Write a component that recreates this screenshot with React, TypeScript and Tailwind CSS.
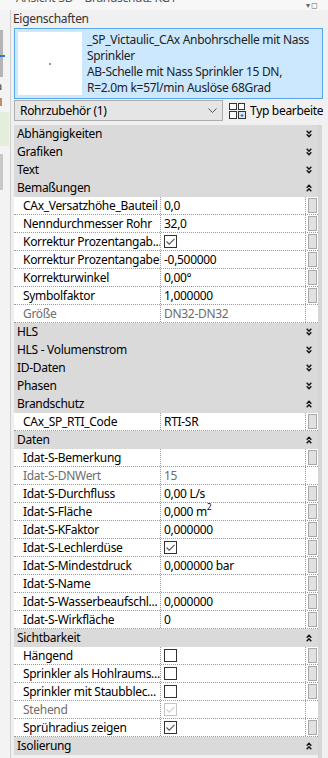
import React from "react";

type Row =
  | { kind: "cat"; label: string; open?: boolean }
  | {
      kind: "prop";
      label: string;
      value?: React.ReactNode;
      check?: boolean;
      box?: boolean;
      off?: boolean;
    };

const rows: Row[] = [
  { kind: "cat", label: "Abhängigkeiten" },
  { kind: "cat", label: "Grafiken" },
  { kind: "cat", label: "Text" },
  { kind: "cat", label: "Bemaßungen", open: true },
  { kind: "prop", label: "CAx_Versatzhöhe_Bauteil", value: "0,0" },
  { kind: "prop", label: "Nenndurchmesser Rohr", value: "32,0" },
  { kind: "prop", label: "Korrektur Prozentangab...", box: true, check: true },
  { kind: "prop", label: "Korrektur Prozentangabe", value: "-0,500000" },
  { kind: "prop", label: "Korrekturwinkel", value: "0,00°" },
  { kind: "prop", label: "Symbolfaktor", value: "1,000000" },
  { kind: "prop", label: "Größe", value: "DN32-DN32", off: true },
  { kind: "cat", label: "HLS" },
  { kind: "cat", label: "HLS - Volumenstrom" },
  { kind: "cat", label: "ID-Daten" },
  { kind: "cat", label: "Phasen" },
  { kind: "cat", label: "Brandschutz", open: true },
  { kind: "prop", label: "CAx_SP_RTI_Code", value: "RTI-SR" },
  { kind: "cat", label: "Daten", open: true },
  { kind: "prop", label: "Idat-S-Bemerkung", value: "" },
  { kind: "prop", label: "Idat-S-DNWert", value: "15", off: true },
  { kind: "prop", label: "Idat-S-Durchfluss", value: "0,00 L/s" },
  {
    kind: "prop",
    label: "Idat-S-Fläche",
    value: (
      <>
        0,000 m<sup className="text-[8px] -top-[5px]">2</sup>
      </>
    ),
  },
  { kind: "prop", label: "Idat-S-KFaktor", value: "0,000000" },
  { kind: "prop", label: "Idat-S-Lechlerdüse", box: true, check: true },
  { kind: "prop", label: "Idat-S-Mindestdruck", value: "0,000000 bar" },
  { kind: "prop", label: "Idat-S-Name", value: "" },
  { kind: "prop", label: "Idat-S-Wasserbeaufschl...", value: "0,000000" },
  { kind: "prop", label: "Idat-S-Wirkfläche", value: "0" },
  { kind: "cat", label: "Sichtbarkeit", open: true },
  { kind: "prop", label: "Hängend", box: true },
  { kind: "prop", label: "Sprinkler als Hohlraums...", box: true },
  { kind: "prop", label: "Sprinkler mit Staubblec...", box: true },
  { kind: "prop", label: "Stehend", box: true, check: true, off: true },
  { kind: "prop", label: "Sprühradius zeigen", box: true, check: true },
  { kind: "cat", label: "Isolierung", open: true },
];

function Chevrons({ up }: { up?: boolean }) {
  return (
    <svg width="6" height="8" viewBox="0 0 6 8" className={up ? "rotate-180" : ""}>
      <path d="M0.7 0.8 L3 3.2 L5.3 0.8 M0.7 4.3 L3 6.7 L5.3 4.3" fill="none" stroke="#111" strokeWidth="1.4" />
    </svg>
  );
}

function CheckBox({ checked, off }: { checked?: boolean; off?: boolean }) {
  return (
    <div
      className={`w-[13px] h-[13px] border bg-white flex items-center justify-center ${
        off ? "border-[#c4c4c4]" : "border-[#333333]"
      }`}
    >
      {checked && (
        <svg width="11" height="11" viewBox="0 0 11 11">
          <path d="M1.5 5.5 L4.2 8.2 L9.5 2.8" fill="none" stroke={off ? "#cfcfcf" : "#555"} strokeWidth="1.1" />
        </svg>
      )}
    </div>
  );
}

function TypeIcon() {
  return (
    <svg width="17" height="16" viewBox="0 0 17 16">
      <rect x="0.5" y="0.5" width="7" height="6" fill="#fff" stroke="#333" />
      <rect x="0.5" y="8.5" width="7" height="7" fill="#fff" stroke="#333" />
      <rect x="9.5" y="0.5" width="6" height="6" fill="#fff" stroke="#333" />
      <rect x="9.5" y="8.5" width="7" height="7" fill="#dbe9f6" stroke="#333" />
      <path d="M11.5 12.5 h3 M13 11 v3" stroke="#2a6fb5" />
    </svg>
  );
}

function GridRow({ row }: { row: Row }) {
  if (row.kind === "cat") {
    return (
      <div className="h-[18px] flex items-center justify-between bg-[#dadada] pl-[3px] pr-[6px] text-black">
        <span>{row.label}</span>
        <Chevrons up={row.open} />
      </div>
    );
  }
  const tone = row.off ? "text-[#6d6d6d]" : "text-black";
  return (
    <div className="h-[18px] flex bg-white border-b border-dotted border-[#9a9a9a]">
      <div className={`w-[147px] shrink-0 pl-[9px] border-r border-dotted border-[#9a9a9a] whitespace-nowrap overflow-hidden ${tone}`}>
        {row.label}
      </div>
      <div className={`flex-1 pl-[3px] flex items-center border-r border-dotted border-[#9a9a9a] whitespace-nowrap ${tone}`}>
        {row.box ? <CheckBox checked={row.check} off={row.off} /> : row.value}
      </div>
      <div className="w-[12px] shrink-0 flex items-center justify-center">
        {!row.off && <div className="w-[9px] h-[15px] bg-[#e1e1e1] border border-[#a9a9a9]" />}
      </div>
    </div>
  );
}

export default function App() {
  return (
    <div
      className="w-[328px] h-[758px] overflow-hidden bg-[#f0f0f0] text-[12px] leading-[18px] tracking-[-0.3px] text-black"
      style={{ fontFamily: '"Noto Sans", "Open Sans", sans-serif' }}
    >
      <div className="h-[10px] overflow-hidden flex items-start justify-between pl-[16px] pr-[10px] bg-[#f7f7f7]">
        <span className="leading-[14px] -mt-[9px] text-[#555]">Ansicht 3D – Brandschutz KG1</span>
        <span className="text-[8px] leading-[10px] text-[#666]">▾ ◻</span>
      </div>
      <div className="flex h-[748px]">
        <div className="w-[10px] shrink-0 flex flex-col bg-[#f3f3f3]">
          <div className="h-[20px]" />
          <div className="h-[47px] w-[3px] bg-[#b5b5b5]" />
          <div className="h-[2px] w-[5px] bg-[#2b79d0] -mt-[22px] mb-[20px]" />
          <div className="h-[18px] text-[11px] leading-[18px] text-[#444] -ml-[4px]">a</div>
          <div className="h-[14px] text-[11px] leading-[14px] text-[#444] -ml-[3px]">ll</div>
          <div className="h-[34px] w-[9px] bg-[#e4eedb] mt-[3px]" />
          <div className="h-[36px] w-[3px] bg-[#c8c8c8] mt-[8px]" />
        </div>
        <div className="flex-1 flex flex-col border-l border-[#cfcfcf]">
          <div className="h-[18px] pl-[2px] text-[#333]">Eigenschaften</div>
          <div className="ml-[3px] mr-[5px] h-[71px] bg-[#cce8ff] border border-[#5ba6e6] flex p-[3px]">
            <div className="w-[64px] h-[63px] bg-white flex items-center justify-center shrink-0">
              <div className="w-[2px] h-[2px] bg-[#9a9a9a]" />
            </div>
            <div className="pl-[5px] leading-[16px] text-[#222] whitespace-nowrap">
              <div>_SP_Victaulic_CAx Anbohrschelle mit Nass</div>
              <div>Sprinkler</div>
              <div>AB-Schelle mit Nass Sprinkler 15 DN,</div>
              <div>R=2.0m k=57l/min Auslöse 68Grad</div>
            </div>
          </div>
          <div className="mt-[1px] h-[21px] flex items-center pl-[3px]">
            <div className="w-[209px] h-[21px] bg-[#e5e5e5] border border-[#adadad] flex items-center justify-between pl-[5px] pr-[5px]">
              <span>Rohrzubehör (1)</span>
              <svg width="9" height="6" viewBox="0 0 9 6">
                <path d="M0.5 0.5 L4.5 4.5 L8.5 0.5" fill="none" stroke="#555" />
              </svg>
            </div>
            <div className="ml-[6px] flex items-center gap-[4px] whitespace-nowrap overflow-hidden">
              <TypeIcon />
              <span>Typ bearbeite</span>
            </div>
          </div>
          <div className="mt-[4px] flex flex-1 min-h-0">
            <div className="w-[304px] ml-[3px] flex flex-col overflow-hidden">
              {rows.map((r, i) => (
                <GridRow key={i} row={r} />
              ))}
            </div>
            <div className="w-[4px] bg-[#d6d6d6]" />
          </div>
        </div>
      </div>
    </div>
  );
}
